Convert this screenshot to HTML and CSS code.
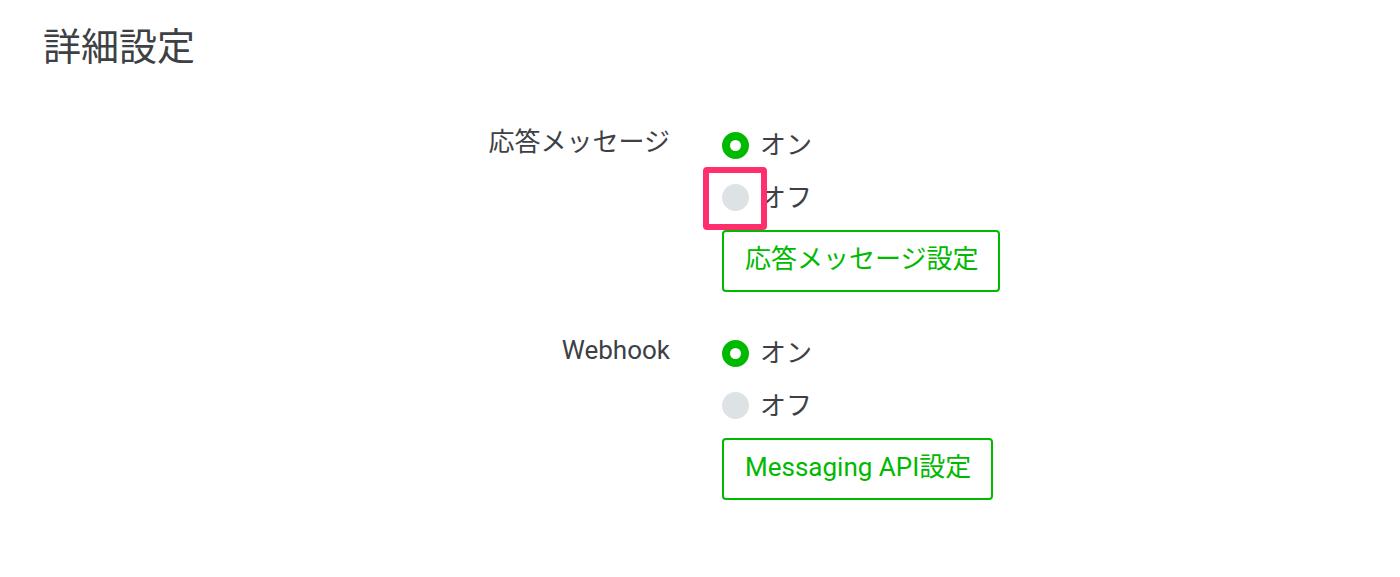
FILE: index.html
```html
<!DOCTYPE html>
<html lang="ja">
<head>
<meta charset="utf-8">
<title>詳細設定</title>
<link rel="stylesheet" href="styles.css">
</head>
<body>
<main class="page">
  <h1 class="title">詳細設定</h1>
  <section class="setting">
    <div class="label">応答メッセージ</div>
    <div class="controls">
      <div class="option"><span class="radio radio-on"></span><span class="option-text">オン</span></div>
      <div class="option"><span class="radio radio-off"></span><span class="option-text">オフ</span><span class="highlight"></span></div>
      <button class="btn">応答メッセージ設定</button>
    </div>
  </section>
  <section class="setting setting-second">
    <div class="label">Webhook</div>
    <div class="controls">
      <div class="option"><span class="radio radio-on"></span><span class="option-text">オン</span></div>
      <div class="option"><span class="radio radio-off"></span><span class="option-text">オフ</span></div>
      <button class="btn">Messaging API設定</button>
    </div>
  </section>
</main>
</body>
</html>
```

FILE: styles.css
```css
html, body {
  margin: 0;
  padding: 0;
  background: #ffffff;
}

body {
  font-family: Roboto, "Noto Sans CJK JP", sans-serif;
  color: #3d4044;
}

.page {
  padding: 19px 43px 0 43px;
}

.title {
  margin: 0;
  font-size: 38px;
  font-weight: 400;
  line-height: 57px;
  color: #3d4044;
}

.setting {
  display: grid;
  grid-template-columns: 627px 1fr;
  column-gap: 52px;
  margin-top: 43px;
}

.setting-second {
  margin-top: 35px;
}

.label {
  text-align: right;
  font-size: 26px;
  line-height: 47px;
  padding-bottom: 5px;
}

.controls {
  display: flex;
  flex-direction: column;
  align-items: flex-start;
}

.option {
  position: relative;
  display: flex;
  align-items: center;
  gap: 11px;
  height: 52.5px;
  font-size: 26px;
}

.option-text {
  padding-bottom: 5px;
}

.radio {
  box-sizing: border-box;
  width: 27px;
  height: 27px;
  border-radius: 50%;
  flex: none;
}

.radio-on {
  border: 8.5px solid #00b900;
  background: #ffffff;
}

.radio-off {
  background: #dde2e4;
}

.highlight {
  position: absolute;
  left: -19px;
  top: -5px;
  box-sizing: border-box;
  width: 64px;
  height: 63px;
  border: 6px solid #ff2f6e;
  border-radius: 4px;
}

.btn {
  margin-top: 6px;
  box-sizing: border-box;
  height: 62px;
  padding: 0 20px 3px 21px;
  border: 2px solid #00b900;
  border-radius: 4px;
  background: #ffffff;
  color: #00b900;
  font-family: Roboto, "Noto Sans CJK JP", sans-serif;
  font-size: 26px;
  line-height: 31px;
}
```
